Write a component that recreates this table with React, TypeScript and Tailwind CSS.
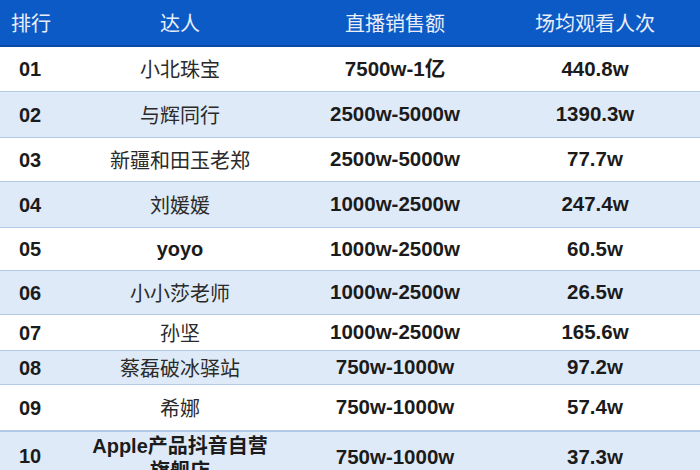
import React from "react";

type Row = {
  rank: string;
  name: string;
  sales: string;
  views: string;
  h: string;
  alt: boolean;
  latin?: boolean;
};

const rows: Row[] = [
  { rank: "01", name: "小北珠宝", sales: "7500w-1亿", views: "440.8w", h: "h-[45px]", alt: false },
  { rank: "02", name: "与辉同行", sales: "2500w-5000w", views: "1390.3w", h: "h-[46px]", alt: true },
  { rank: "03", name: "新疆和田玉老郑", sales: "2500w-5000w", views: "77.7w", h: "h-[44px]", alt: false },
  { rank: "04", name: "刘媛媛", sales: "1000w-2500w", views: "247.4w", h: "h-[46px]", alt: true },
  { rank: "05", name: "yoyo", sales: "1000w-2500w", views: "60.5w", h: "h-[43px]", alt: false, latin: true },
  { rank: "06", name: "小小莎老师", sales: "1000w-2500w", views: "26.5w", h: "h-[44px]", alt: true },
  { rank: "07", name: "孙坚", sales: "1000w-2500w", views: "165.6w", h: "h-[36px]", alt: false },
  { rank: "08", name: "蔡磊破冰驿站", sales: "750w-1000w", views: "97.2w", h: "h-[34px]", alt: true },
  { rank: "09", name: "希娜", sales: "750w-1000w", views: "57.4w", h: "h-[46px]", alt: false },
];

const sans = "font-['Liberation_Sans','Noto_Sans_CJK_SC',sans-serif]";
const cjk = "font-['Noto_Sans_CJK_SC',sans-serif]";

export default function App() {
  return (
    <div className="w-[700px] h-[470px] overflow-hidden bg-white text-[#1b1b1b]">
      {/* header */}
      <div className={`grid grid-cols-[80px_200px_230px_170px_1fr] h-[47px] items-center bg-[#0c5ac6] border-b-2 border-[#0a4aa6] text-[#e9eef8] text-[20px] ${cjk}`}>
        <div className="pl-[11px]">排行</div>
        <div className="text-center">达人</div>
        <div className="text-center">直播销售额</div>
        <div className="text-center">场均观看人次</div>
        <div />
      </div>

      {rows.map((r) => (
        <div
          key={r.rank}
          className={`grid grid-cols-[80px_200px_230px_170px_1fr] items-center border-b border-[#b3c9e8] ${r.h} ${
            r.alt ? "bg-[#dfeaf8]" : "bg-white"
          }`}
        >
          <div className={`pl-[19px] font-bold text-[20px] ${sans}`}>{r.rank}</div>
          <div
            className={`text-center text-[20px] ${
              r.latin ? `font-bold ${sans}` : `text-[#2a2a2a] ${cjk}`
            }`}
          >
            {r.name}
          </div>
          <div className={`text-center font-bold text-[20.5px] ${sans}`}>{r.sales}</div>
          <div className={`text-center font-bold text-[20.5px] ${sans}`}>{r.views}</div>
          <div />
        </div>
      ))}

      {/* last row: name wraps onto a second line, cut by the window edge */}
      <div className="grid grid-cols-[80px_200px_230px_170px_1fr] items-start h-[46px] bg-[#dfeaf8] border-t border-[#b3c9e8]">
        <div className={`pl-[19px] pt-[13px] font-bold text-[20px] leading-[23px] ${sans}`}>10</div>
        <div className={`text-center pt-[2px] font-bold text-[20px] leading-[25px] ${sans}`}>
          Apple产品抖音自营
          <br />
          旗舰店
        </div>
        <div className={`text-center pt-[13px] font-bold text-[20.5px] leading-[23px] ${sans}`}>750w-1000w</div>
        <div className={`text-center pt-[13px] font-bold text-[20.5px] leading-[23px] ${sans}`}>37.3w</div>
        <div />
      </div>
    </div>
  );
}
